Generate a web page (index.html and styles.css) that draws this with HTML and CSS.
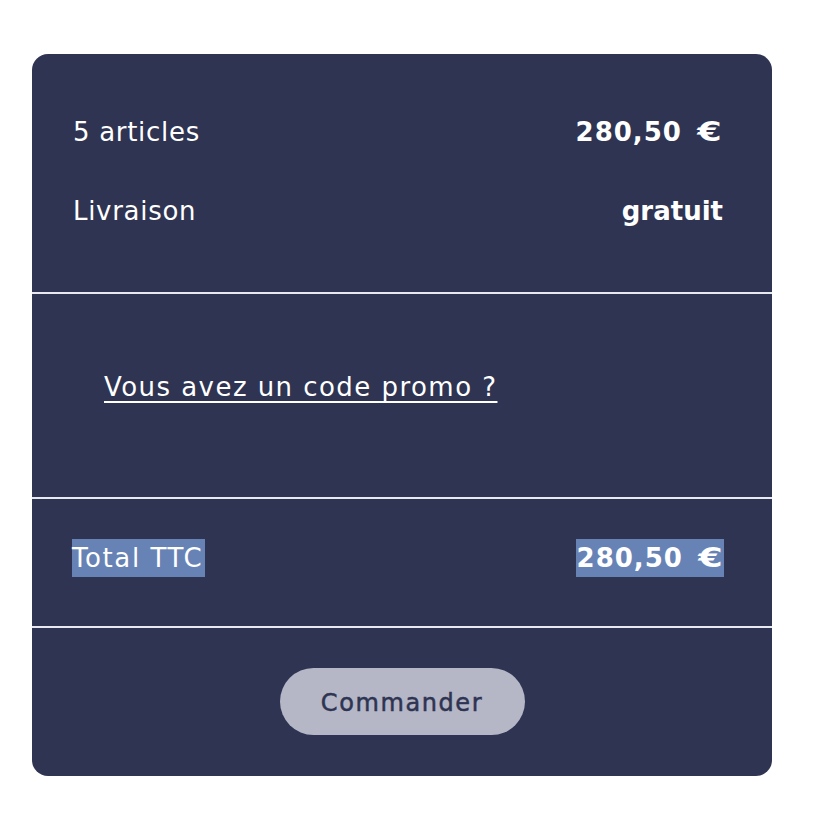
FILE: index.html
```html
<!DOCTYPE html>
<html lang="fr">
<head>
<meta charset="utf-8">
<title>Récapitulatif</title>
<link rel="stylesheet" href="styles.css">
</head>
<body>
<div class="page">
  <div class="card">
    <div class="summary">
      <div class="row"><span class="label">5 articles</span><span class="value amount">280,50<span class="cur">€</span></span></div>
      <div class="row"><span class="label">Livraison</span><span class="value">gratuit</span></div>
    </div>
    <div class="promo">
      <a class="promo-link" href="#">Vous avez un code promo ?</a>
    </div>
    <div class="total">
      <span class="label hl">Total TTC</span><span class="value amount hl">280,50<span class="cur">€</span></span>
    </div>
    <div class="actions">
      <button class="btn">Commander</button>
    </div>
  </div>
</div>
</body>
</html>
```
FILE: styles.css
```css
* { box-sizing: border-box; }
body {
  margin: 0;
  background: #ffffff;
  font-family: "DejaVu Sans", "Open Sans", sans-serif;
  color: #ffffff;
}
.page {
  padding: 54px 64px 0 32px;
}
.card {
  width: 740px;
  height: 722px;
  background: #2e3452;
  border-radius: 16px;
  overflow: hidden;
}
.summary {
  padding: 58px 49px 61px 41px;
  display: flex;
  flex-direction: column;
  gap: 39px;
}
.row, .total {
  display: flex;
  justify-content: space-between;
  align-items: center;
}
.row { height: 40px; }
.label {
  font-size: 26px;
  font-weight: 400;
  letter-spacing: 0.7px;
}
.value {
  font-size: 26px;
  font-weight: 700;
}
.amount {
  letter-spacing: 1px;
}
.cur {
  display: inline-block;
  margin-left: 22px;
  transform: scaleX(1.35);
  transform-origin: right center;
}
.promo {
  border-top: 2px solid #e8e8ef;
  height: 205px;
  padding: 73px 0 0 72px;
}
.promo-link {
  color: #ffffff;
  font-size: 26px;
  line-height: 40px;
  letter-spacing: 1.45px;
  text-decoration: underline;
  text-underline-offset: 5px;
  text-decoration-thickness: 2px;
}
.total {
  border-top: 2px solid #e8e8ef;
  height: 129px;
  padding: 0 48px 10px 40px;
}
.hl {
  display: inline-block;
  background: #6783b6;
  line-height: 38px;
}
.label.hl {
  letter-spacing: 1.6px;
  padding-right: 2px;
}
.value.hl { padding-left: 1px; }
.actions {
  border-top: 2px solid #e8e8ef;
  display: flex;
  justify-content: center;
  padding-top: 40px;
}
.btn {
  width: 245px;
  height: 67px;
  padding-top: 3px;
  border: 0;
  border-radius: 34px;
  background: #b5b7c6;
  color: #2e3452;
  font-family: "DejaVu Sans", "Open Sans", sans-serif;
  font-size: 24px;
  font-weight: 400;
  letter-spacing: 1.6px;
  -webkit-text-stroke: 0.5px #2e3452;
}
```
